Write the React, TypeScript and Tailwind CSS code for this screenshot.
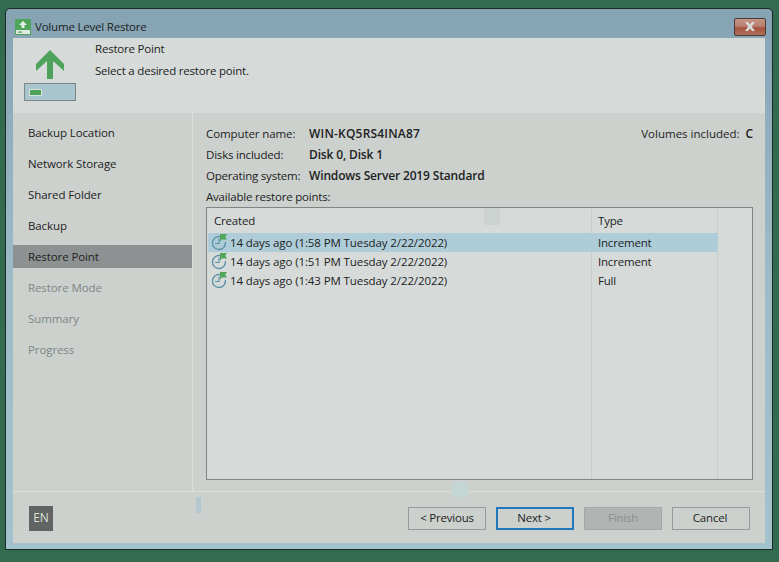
import React from 'react';

const font = { fontFamily: '"Open Sans", "Noto Sans", sans-serif' };

const steps = [
  { label: 'Backup Location', state: 'done' },
  { label: 'Network Storage', state: 'done' },
  { label: 'Shared Folder', state: 'done' },
  { label: 'Backup', state: 'done' },
  { label: 'Restore Point', state: 'active' },
  { label: 'Restore Mode', state: 'todo' },
  { label: 'Summary', state: 'todo' },
  { label: 'Progress', state: 'todo' },
];

const points = [
  { created: '14 days ago (1:58 PM Tuesday 2/22/2022)', type: 'Increment', selected: true },
  { created: '14 days ago (1:51 PM Tuesday 2/22/2022)', type: 'Increment', selected: false },
  { created: '14 days ago (1:43 PM Tuesday 2/22/2022)', type: 'Full', selected: false },
];

const ClockIcon = () => (
  <svg width="18" height="18" viewBox="0 0 18 18" className="shrink-0">
    <path d="M9 2.6A6.5 6.5 0 1 0 14.4 8" fill="none" stroke="#5b8fa8" strokeWidth="1.3" />
    <path d="M8 4.5V9.5H4" fill="none" stroke="#5b8fa8" strokeWidth="1.2" />
    <path d="M9 0H16L14.2 2.8L16 5.6H10.2V7H9Z" fill="#4fa65a" />
  </svg>
);

const TitleIcon = () => (
  <svg width="16" height="16" viewBox="0 0 16 16" className="shrink-0">
    <rect width="16" height="16" fill="#4fa65a" />
    <path d="M8 2L12 6H9.5V9H6.5V6H4Z" fill="#e6efe6" />
    <rect x="1" y="11" width="14" height="4" fill="#dfe8e0" />
    <rect x="3" y="12.5" width="4" height="1.2" fill="#4fa65a" />
  </svg>
);

const HeaderIcon = () => (
  <div className="flex flex-col items-start">
    <svg width="30" height="30" viewBox="0 0 30 30" className="ml-[11px]">
      <path d="M15 1L29 15V22L18 12V30H12V12L1 22V15Z" fill="#4da35b" />
    </svg>
    <div className="mt-[4px] flex h-[18px] w-[52px] items-center border border-[#7d8585] bg-[#a9c5cf] pl-[5px]">
      <div className="h-[5px] w-[11px] bg-[#4da35b] ring-1 ring-[#d5e2d8]" />
    </div>
  </div>
);

function Footer() {
  const btn = 'flex h-[23px] w-[78px] items-center justify-center text-[11.5px] tracking-[-0.2px]';
  return (
    <div className="flex h-[52px] items-center justify-between border-t border-[#dadfdc] pl-[16px] pr-[15px] pt-[1px]">
      <div className="flex h-[25px] w-[24px] items-center justify-center bg-[#616462] text-[12px] text-[#d9e2d8]">EN</div>
      <div className="flex gap-[10px]">
        <button className={`${btn} border border-[#969c9a] text-[#222]`}>&lt; Previous</button>
        <button className={`${btn} border-2 border-[#1f78bd] pr-[2px] text-[#222]`}>Next &gt;</button>
        <button className={`${btn} border border-[#a5a9a8] bg-[#b0b4b3] text-[#8a8f8e]`}>Finish</button>
        <button className={`${btn} border border-[#969c9a] pr-[2px] text-[#222]`}>Cancel</button>
      </div>
    </div>
  );
}

export default function App() {
  const bold = 'text-[12px] font-semibold tracking-[-0.15px]';
  return (
    <div className="relative h-[562px] w-[779px] overflow-hidden bg-[#326b50] pl-[5px] pt-[8px] text-[11.5px] tracking-[-0.2px]" style={font}>
      <div className="flex h-[542px] w-[768px] flex-col rounded-t-[5px] border border-[#1c2a28] bg-gradient-to-b from-[#86a3b3] via-[#9dbcc8] to-[#a2c2ce] px-[7px] pb-[6px]">
        {/* title bar */}
        <div className="flex h-[29px] shrink-0 items-center pl-[2px] pt-[6px] text-[#1c2020]">
          <TitleIcon />
          <span className="ml-[4px]">Volume Level Restore</span>
          <div className="ml-auto mr-[-1px] flex h-[18px] w-[32px] items-center justify-center rounded-[2px] border border-[#4b3a38] bg-[linear-gradient(#c49484_0%,#b98070_45%,#a5533e_55%,#b0705c_100%)]">
            <svg width="12" height="9" viewBox="0 0 12 9">
              <path d="M1 0H4L6 2.5L8 0H11L7.7 4.5L11 9H8L6 6.5L4 9H1L4.3 4.5Z" fill="#d9dbd9" />
            </svg>
          </div>
        </div>

        <div className="flex min-h-0 flex-1 flex-col bg-[#ccd1ce]">
          {/* header */}
          <div className="flex h-[75px] shrink-0 bg-[#d6dbda] pl-[11px] pt-[11px]">
            <HeaderIcon />
            <div className="ml-[19px] mt-[-10px] text-[#1d2222]">
              <div className="leading-[20px]">Restore Point</div>
              <div className="mt-[2px] leading-[20px]">Select a desired restore point.</div>
            </div>
          </div>

          <div className="flex min-h-0 flex-1">
            {/* wizard steps */}
            <div className="flex w-[180px] shrink-0 flex-col border-r border-[#dadfdc] pt-[4px] tracking-[-0.1px]">
              {steps.map((s) =>
                s.state === 'active' ? (
                  <div key={s.label} className="my-[4px] flex h-[23px] items-center bg-[#8d9191] pl-[15px] text-[#1d2222]">
                    {s.label}
                  </div>
                ) : (
                  <div key={s.label} className={`flex h-[31px] items-center pl-[15px] ${s.state === 'todo' ? 'text-[#7f8786]' : 'text-[#1d2222]'}`}>
                    {s.label}
                  </div>
                ),
              )}
            </div>

            {/* restore point details */}
            <div className="flex min-w-0 flex-1 flex-col pl-[13px] pr-[12px] pt-[10px] text-[#1d2222]">
              <div className="flex h-[21px] items-center">
                <span className="w-[103px] tracking-[-0.1px]">Computer name:</span>
                <b className="text-[12px] font-semibold tracking-[0.2px]">WIN-KQ5RS4INA87</b>
                <span className="ml-auto tracking-[0px]">Volumes included:</span>
                <b className={`ml-[6px] ${bold}`}>C</b>
              </div>
              <div className="flex h-[21px] items-center">
                <span className="w-[103px]">Disks included:</span>
                <b className={bold}>Disk 0, Disk 1</b>
              </div>
              <div className="flex h-[21px] items-center">
                <span className="w-[103px]">Operating system:</span>
                <b className={bold}>Windows Server 2019 Standard</b>
              </div>
              <div className="flex h-[21px] items-center">Available restore points:</div>
              <div className="h-[273px] border border-[#7f8584] bg-[#d6dbda] pl-[1px] pt-[1px]">
                <div className="relative h-full w-[510px]">
                  <div className="absolute bottom-0 left-[383px] top-0 w-px bg-[#c6d0d0]" />
                  <div className="absolute bottom-0 right-0 top-0 w-px bg-[#c6d0d0]" />
                  <div className="flex h-[24px] items-center">
                    <span className="w-[385px] pl-[6px]">Created</span>
                    <span className="pl-[5px]">Type</span>
                  </div>
                  {points.map((p) => (
                    <div key={p.created} className={`relative flex h-[19px] items-center ${p.selected ? 'bg-[#aecdd8]' : ''}`}>
                      <div className="flex w-[385px] items-center pl-[3px]">
                        <ClockIcon />
                        <span className="ml-[1px] tracking-[-0.1px]">{p.created}</span>
                      </div>
                      <span className="pl-[5px]">{p.type}</span>
                    </div>
                  ))}
                </div>
              </div>
            </div>
          </div>

          <Footer />
        </div>
      </div>
      {/* faint capture artefacts lying over the dialog */}
      <div className="absolute left-[196px] top-[497px] h-[16px] w-[5px] bg-[#b4c8cf]" />
      <div className="absolute left-[452px] top-[482px] h-[15px] w-[16px] bg-[#c4d6d4]" />
      <div className="absolute left-[484px] top-[208px] h-[17px] w-[16px] bg-[#ccd2d0]" />
    </div>
  );
}
